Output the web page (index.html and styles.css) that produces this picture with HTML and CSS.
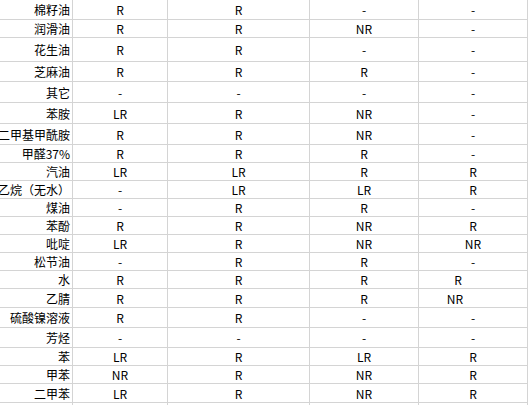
FILE: index.html
```html
<!DOCTYPE html>
<html lang="zh">
<head>
<meta charset="utf-8">
<link rel="stylesheet" href="styles.css">
</head>
<body>
<div class="sheet">
  <div class="c name"><span>棉籽油</span></div><div class="c">R</div><div class="c">R</div><div class="c">-</div><div class="c">-</div>
  <div class="c name"><span>润滑油</span></div><div class="c">R</div><div class="c">R</div><div class="c">NR</div><div class="c">-</div>
  <div class="c name"><span>花生油</span></div><div class="c">R</div><div class="c">R</div><div class="c">-</div><div class="c">-</div>
  <div class="c name"><span>芝麻油</span></div><div class="c">R</div><div class="c">R</div><div class="c">R</div><div class="c">-</div>
  <div class="c name"><span>其它</span></div><div class="c">-</div><div class="c">-</div><div class="c">-</div><div class="c">-</div>
  <div class="c name"><span>苯胺</span></div><div class="c">LR</div><div class="c">R</div><div class="c">NR</div><div class="c">-</div>
  <div class="c name"><span>二甲基甲酰胺</span></div><div class="c">R</div><div class="c">R</div><div class="c">NR</div><div class="c">-</div>
  <div class="c name"><span>甲醛37%</span></div><div class="c">R</div><div class="c">R</div><div class="c">R</div><div class="c">-</div>
  <div class="c name"><span>汽油</span></div><div class="c">LR</div><div class="c">LR</div><div class="c">R</div><div class="c">R</div>
  <div class="c name"><span>乙烷（无水）</span></div><div class="c">-</div><div class="c">LR</div><div class="c">LR</div><div class="c">R</div>
  <div class="c name"><span>煤油</span></div><div class="c">-</div><div class="c">R</div><div class="c">R</div><div class="c">-</div>
  <div class="c name"><span>苯酚</span></div><div class="c">R</div><div class="c">R</div><div class="c">NR</div><div class="c">R</div>
  <div class="c name"><span>吡啶</span></div><div class="c">LR</div><div class="c">R</div><div class="c">NR</div><div class="c">NR</div>
  <div class="c name"><span>松节油</span></div><div class="c">-</div><div class="c">R</div><div class="c">R</div><div class="c">-</div>
  <div class="c name"><span>水</span></div><div class="c">R</div><div class="c">R</div><div class="c">R</div><div class="c shift-r">R</div>
  <div class="c name"><span>乙腈</span></div><div class="c">R</div><div class="c">R</div><div class="c">R</div><div class="c shift-nr">NR</div>
  <div class="c name"><span>硫酸镍溶液</span></div><div class="c">R</div><div class="c">R</div><div class="c">-</div><div class="c">-</div>
  <div class="c name"><span>芳烃</span></div><div class="c">-</div><div class="c">-</div><div class="c">-</div><div class="c">-</div>
  <div class="c name"><span>苯</span></div><div class="c">LR</div><div class="c">R</div><div class="c">LR</div><div class="c">R</div>
  <div class="c name"><span>甲苯</span></div><div class="c">NR</div><div class="c">R</div><div class="c">NR</div><div class="c">R</div>
  <div class="c name"><span>二甲苯</span></div><div class="c">LR</div><div class="c">R</div><div class="c">NR</div><div class="c">R</div>
  <div class="c name"></div><div class="c"></div><div class="c"></div><div class="c"></div><div class="c"></div>
</div>
</body>
</html>
```
FILE: styles.css
```css
html, body {
  margin: 0;
  padding: 0;
  background: #ffffff;
  overflow: hidden;
}
.sheet {
  display: grid;
  width: 528px;
  grid-template-columns: 73px 95px 142px 109px 109px;
  grid-template-rows: 20px 18px 24px 20px 21px 21px 21px 18px 18px 18px 18px 18px 18px 18px 18px 19px 20px 20px 18px 18px 19px 18px;
  font-family: "Noto Sans CJK SC", "Noto Sans", sans-serif;
  font-size: 12px;
  color: #000000;
}
.c {
  box-sizing: border-box;
  border-right: 1px solid #d4d4d4;
  border-bottom: 1px solid #d4d4d4;
  display: flex;
  align-items: center;
  justify-content: center;
  white-space: nowrap;
  line-height: 1;
  padding-top: 1px;
}
.name {
  justify-content: flex-end;
  padding-right: 2px;
}
.name span {
  flex-shrink: 0;
}
.shift-r {
  padding-right: 30px;
}
.shift-nr {
  padding-right: 36px;
}
```
